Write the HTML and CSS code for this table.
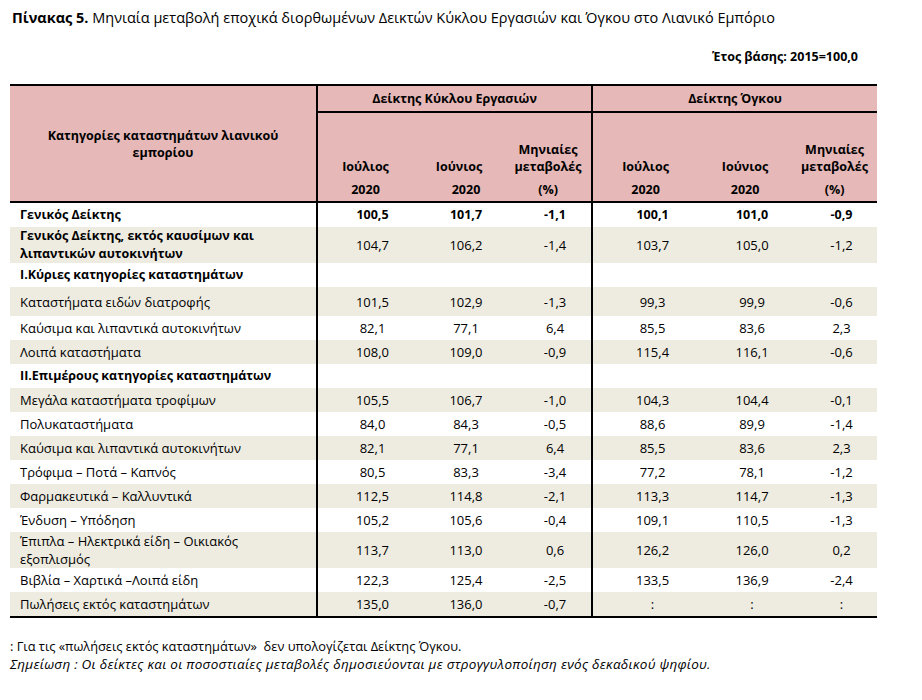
FILE: index.html
```html
<!DOCTYPE html>
<html lang="el">
<head>
    <meta charset="UTF-8">
    <meta name="viewport" content="width=device-width, initial-scale=1.0">
    <title>Πίνακας 5</title>
    <link rel="stylesheet" href="styles.css">
</head>
<body>

    <div class="page">
        <p class="caption"><strong>Πίνακας 5.</strong> Μηνιαία μεταβολή εποχικά διορθωμένων Δεικτών Κύκλου Εργασιών και Όγκου στο Λιανικό Εμπόριο</p>
        <p class="base-year">Έτος βάσης: 2015=100,0</p>

        <table class="stats">
            <colgroup>
                <col class="c-name">
                <col class="c1"><col class="c2"><col class="c3">
                <col class="c4"><col class="c5"><col class="c6">
            </colgroup>
            <thead>
                <tr class="group-row">
                    <th rowspan="3" class="name-head">Κατηγορίες καταστημάτων λιανικού<br>εμπορίου</th>
                    <th colspan="3" class="group sep">Δείκτης Κύκλου Εργασιών</th>
                    <th colspan="3" class="group sep">Δείκτης Όγκου</th>
                </tr>
                <tr class="month-row">
                    <th class="sep">Ιούλιος</th>
                    <th>Ιούνιος</th>
                    <th>Μηνιαίες<br>μεταβολές</th>
                    <th class="sep">Ιούλιος</th>
                    <th>Ιούνιος</th>
                    <th>Μηνιαίες<br>μεταβολές</th>
                </tr>
                <tr class="year-row">
                    <th class="sep">2020</th>
                    <th class="yr">2020</th>
                    <th>(%)</th>
                    <th class="sep">2020</th>
                    <th>2020</th>
                    <th>(%)</th>
                </tr>
            </thead>
            <tbody>
                <tr class="bold">
                    <td>Γενικός Δείκτης</td>
                    <td class="num sep">100,5</td><td class="num">101,7</td><td class="num">-1,1</td>
                    <td class="num sep">100,1</td><td class="num">101,0</td><td class="num">-0,9</td>
                </tr>
                <tr class="shade">
                    <td class="label-bold">Γενικός Δείκτης, εκτός καυσίμων και<br>λιπαντικών αυτοκινήτων</td>
                    <td class="num sep">104,7</td><td class="num">106,2</td><td class="num">-1,4</td>
                    <td class="num sep">103,7</td><td class="num">105,0</td><td class="num">-1,2</td>
                </tr>
                <tr>
                    <td class="label-bold">I.Κύριες κατηγορίες καταστημάτων</td>
                    <td class="num sep"></td><td></td><td></td>
                    <td class="num sep"></td><td></td><td></td>
                </tr>
                <tr class="shade tall">
                    <td>Καταστήματα ειδών διατροφής</td>
                    <td class="num sep">101,5</td><td class="num">102,9</td><td class="num">-1,3</td>
                    <td class="num sep">99,3</td><td class="num">99,9</td><td class="num">-0,6</td>
                </tr>
                <tr>
                    <td>Καύσιμα και λιπαντικά αυτοκινήτων</td>
                    <td class="num sep">82,1</td><td class="num">77,1</td><td class="num">6,4</td>
                    <td class="num sep">85,5</td><td class="num">83,6</td><td class="num">2,3</td>
                </tr>
                <tr class="shade">
                    <td>Λοιπά καταστήματα</td>
                    <td class="num sep">108,0</td><td class="num">109,0</td><td class="num">-0,9</td>
                    <td class="num sep">115,4</td><td class="num">116,1</td><td class="num">-0,6</td>
                </tr>
                <tr>
                    <td class="label-bold">II.Επιμέρους κατηγορίες καταστημάτων</td>
                    <td class="num sep"></td><td></td><td></td>
                    <td class="num sep"></td><td></td><td></td>
                </tr>
                <tr class="shade">
                    <td>Μεγάλα καταστήματα τροφίμων</td>
                    <td class="num sep">105,5</td><td class="num">106,7</td><td class="num">-1,0</td>
                    <td class="num sep">104,3</td><td class="num">104,4</td><td class="num">-0,1</td>
                </tr>
                <tr>
                    <td>Πολυκαταστήματα</td>
                    <td class="num sep">84,0</td><td class="num">84,3</td><td class="num">-0,5</td>
                    <td class="num sep">88,6</td><td class="num">89,9</td><td class="num">-1,4</td>
                </tr>
                <tr class="shade">
                    <td>Καύσιμα και λιπαντικά αυτοκινήτων</td>
                    <td class="num sep">82,1</td><td class="num">77,1</td><td class="num">6,4</td>
                    <td class="num sep">85,5</td><td class="num">83,6</td><td class="num">2,3</td>
                </tr>
                <tr>
                    <td>Τρόφιμα – Ποτά – Καπνός</td>
                    <td class="num sep">80,5</td><td class="num">83,3</td><td class="num">-3,4</td>
                    <td class="num sep">77,2</td><td class="num">78,1</td><td class="num">-1,2</td>
                </tr>
                <tr class="shade">
                    <td>Φαρμακευτικά – Καλλυντικά</td>
                    <td class="num sep">112,5</td><td class="num">114,8</td><td class="num">-2,1</td>
                    <td class="num sep">113,3</td><td class="num">114,7</td><td class="num">-1,3</td>
                </tr>
                <tr>
                    <td>Ένδυση – Υπόδηση</td>
                    <td class="num sep">105,2</td><td class="num">105,6</td><td class="num">-0,4</td>
                    <td class="num sep">109,1</td><td class="num">110,5</td><td class="num">-1,3</td>
                </tr>
                <tr class="shade">
                    <td>Έπιπλα – Ηλεκτρικά είδη – Οικιακός<br>εξοπλισμός</td>
                    <td class="num sep">113,7</td><td class="num">113,0</td><td class="num">0,6</td>
                    <td class="num sep">126,2</td><td class="num">126,0</td><td class="num">0,2</td>
                </tr>
                <tr>
                    <td>Βιβλία – Χαρτικά –Λοιπά είδη</td>
                    <td class="num sep">122,3</td><td class="num">125,4</td><td class="num">-2,5</td>
                    <td class="num sep">133,5</td><td class="num">136,9</td><td class="num">-2,4</td>
                </tr>
                <tr class="shade">
                    <td>Πωλήσεις εκτός καταστημάτων</td>
                    <td class="num sep">135,0</td><td class="num">136,0</td><td class="num">-0,7</td>
                    <td class="num sep">:</td><td class="num">:</td><td class="num">:</td>
                </tr>
            </tbody>
        </table>

        <div class="notes">
            <p>: Για τις «πωλήσεις εκτός καταστημάτων»&nbsp; δεν υπολογίζεται Δείκτης Όγκου.</p>
            <p class="italic">Σημείωση : Οι δείκτες και οι ποσοστιαίες μεταβολές δημοσιεύονται με στρογγυλοποίηση ενός δεκαδικού ψηφίου.</p>
        </div>
    </div>

</body>
</html>
```

FILE: styles.css
```css
body {
    margin: 0;
    font-family: "Open Sans", "Noto Sans", sans-serif;
    color: #000;
    background: #fff;
}

.page {
    width: 867px;
    padding: 8px 10px;
}

p {
    margin: 0;
}

.caption {
    font-size: 14.5px;
    line-height: 20px;
    padding-left: 2px;
    white-space: nowrap;
}

.base-year {
    margin-top: 19px;
    font-size: 12.5px;
    font-weight: bold;
    line-height: 20px;
    text-align: right;
    padding-right: 19px;
}

.stats {
    margin-top: 17px;
    width: 867px;
    border-collapse: collapse;
    table-layout: fixed;
    font-size: 13px;
    border-top: 2px solid #000;
    border-bottom: 2px solid #000;
}

.c-name { width: 307px; }
.c1 { width: 96px; }
.c2 { width: 92px; }
.c3 { width: 87px; }
.c4 { width: 106px; }
.c5 { width: 94px; }
.c6 { width: 85px; }

thead th {
    background: #e6b8b7;
    font-weight: bold;
    font-size: 12.5px;
    text-align: center;
    padding: 0;
    line-height: 17px;
}

.name-head {
    vertical-align: middle;
    border-bottom: 2px solid #000;
}

.group-row th.group {
    height: 25px;
    border-bottom: 2px solid #000;
}

.month-row th {
    height: 62px;
    vertical-align: bottom;
    padding-bottom: 3px;
}

.year-row th {
    height: 23px;
    vertical-align: middle;
    border-bottom: 2px solid #000;
}

.year-row th.yr {
    padding-left: 14px;
}

.sep {
    border-left: 2px solid #000;
}

tbody td {
    height: 24px;
    padding: 0 0 0 10px;
    line-height: 18px;
    vertical-align: middle;
}

tbody td.num {
    text-align: center;
    padding-left: 14px;
}

tbody tr.shade td {
    background: #eeece1;
}

tbody tr.tall td {
    height: 29px;
}

tbody tr.bold td,
.label-bold {
    font-weight: bold;
    font-size: 12.5px;
}

.notes {
    margin-top: 19px;
    font-size: 12.8px;
    line-height: 18px;
}

.italic {
    font-style: italic;
    font-size: 13.5px;
    letter-spacing: 0.25px;
}
```
